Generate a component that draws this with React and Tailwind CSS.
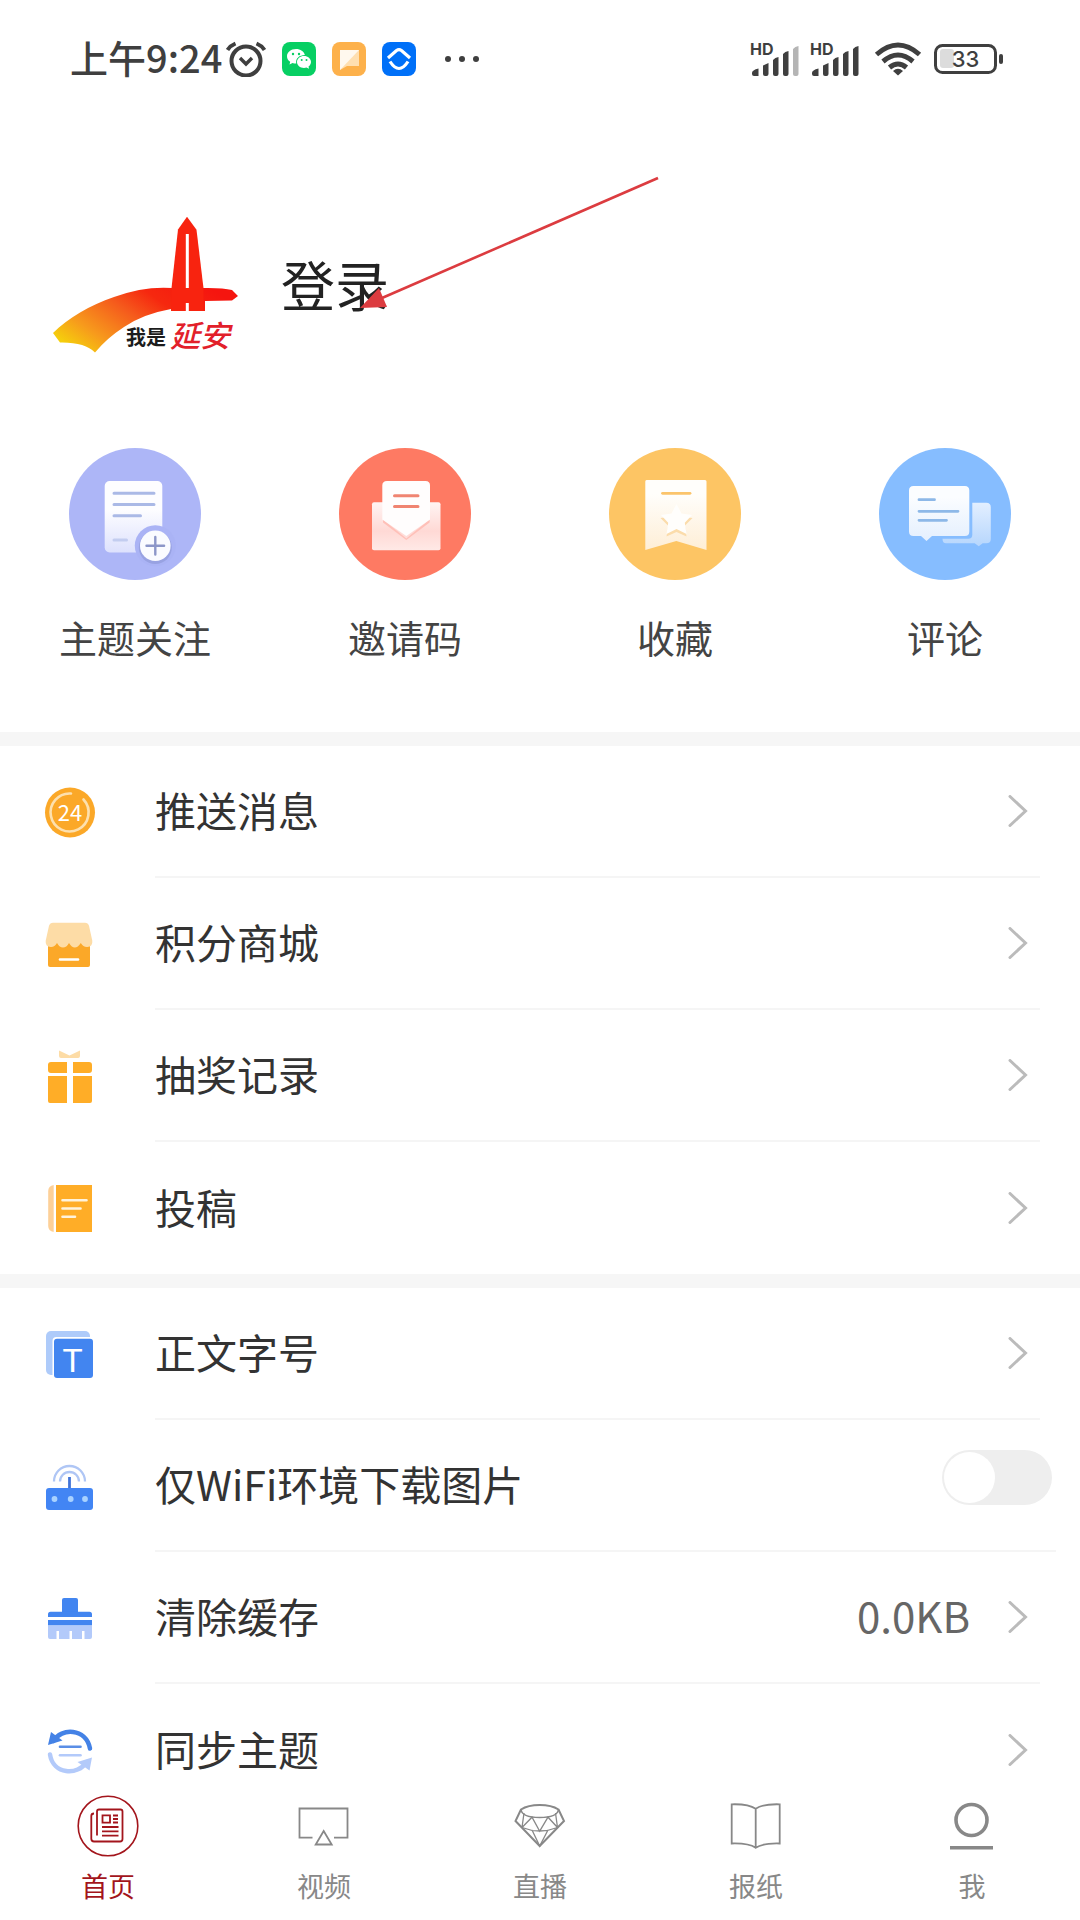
import React, { useState } from "react";

const IconPush = () => (
    <>
        <circle cx="28" cy="28.5" r="25" fill="#fba828" />
        <path d="M41.5 15.5A19 19 0 1 1 29 9.5" fill="none" stroke="#fde0ae" strokeWidth="2.6" strokeLinecap="round" />
        <text x="28" y="36.5" textAnchor="middle" fontSize="22" fill="#fff">24</text>
    </>
);

const IconShop = () => (
    <>
        <path d="M6 26h42v23a2 2 0 0 1-2 2H8a2 2 0 0 1-2-2z" fill="#fba828" />
        <path d="M11 6.7h32q3 0 4 3l3.3 15q.6 6-5 6.3q-4 .3-6.5-4-3 4.500-6 4.500t-5.800-4.500q-2.500 4.500-6 4.500t-6-4.500q-2.500 4.300-6.300 4-5.700-.3-5-6.300l3.300-15q1-3 4-3z" fill="#fddca6" />
        <path d="M18 43.500h18" stroke="#fff" strokeWidth="2.600" strokeLinecap="round" />
    </>
);

const IconGift = () => (
    <>
        <path d="M17 2.500l10.500 5L38 2.500v5.500q0 2-2 2H19q-2 0-2-2z" fill="#fddca6" />
        <path d="M9 14h16v11H9q-3 0-3-3v-5q0-3 3-3zM31 14h16q3 0 3 3v5q0 3-3 3H31zM6 28h19v27H8q-2 0-2-2zM31 28h19v25q0 2-2 2H31z" fill="#ffad27" />
    </>
);

const IconBook = () => (
    <>
        <path d="M11.700 5v47q-5.500-1-5.500-6V11q0-5 5.500-6z" fill="#fdd098" />
        <path d="M14 5h36v47H14z" fill="#ffad27" />
        <path d="M20.500 20.200h24M20.500 28.500h18M20.500 36.700h12.500" stroke="#fff3dc" strokeWidth="2.600" strokeLinecap="round" />
    </>
);

const IconFont = () => (
    <>
        <rect x="4" y="5" width="44" height="44" rx="5" fill="#aecbfa" />
        <rect x="10.500" y="11" width="43" height="43" rx="4" fill="#fff" />
        <rect x="12" y="12.700" width="39" height="39.300" rx="3" fill="#4285f0" />
        <text x="30.500" y="46" textAnchor="middle" fontSize="33" fill="#fff" fontFamily="Liberation Sans, sans-serif">T</text>
    </>
);

const IconRouter = () => (
    <>
        <path d="M12 23.500a15.500 15.500 0 0 1 31 0M18 23.500a9.500 9.500 0 0 1 19 0" fill="none" stroke="#afc6f5" strokeWidth="2.300" />
        <path d="M27.500 19v12" stroke="#4274d8" strokeWidth="2.800" />
        <rect x="4" y="30" width="47" height="22" rx="3" fill="#4285f4" />
        <circle cx="12.500" cy="41" r="2.900" fill="#a9d2ff" />
        <circle cx="28.700" cy="41" r="2.900" fill="#a9d2ff" />
        <circle cx="43" cy="41" r="2.900" fill="#a9d2ff" />
    </>
);

const IconBrush = () => (
    <>
        <path d="M22 8h12q2 0 2 2v12H20V10q0-2 2-2z" fill="#4285f0" />
        <path d="M8.500 21.700h39q2.500 0 2.500 2.500V27H6v-2.800q0-2.500 2.500-2.500zM6 30h44v5.500H6z" fill="#4285f0" />
        <path d="M6 35.500h44V47q0 2-2 2h-5.500v-8h-2.500v8H30v-8h-2.500v8H17v-8h-2.500v8H8q-2 0-2-2z" fill="#b3cafa" />
    </>
);

const IconSync = () => (
    <>
        <path d="M11.500 19C19 5.500 44 6 48 26.500" fill="none" stroke="#4482e6" strokeWidth="4.500" strokeLinecap="round" />
        <path d="M9 10L6 23l14.500-4.500z" fill="#4482e6" />
        <path d="M8 32.500C11 52.500 36 54 44.500 40" fill="none" stroke="#b3cafa" strokeWidth="4.500" strokeLinecap="round" />
        <path d="M47.500 48.500L50 35.500l-14.500 4.500z" fill="#b3cafa" />
        <path d="M18 24.700h20.500" stroke="#5a8ee6" strokeWidth="2.600" strokeLinecap="round" />
        <path d="M18 33.200h20.500" stroke="#b3cafa" strokeWidth="2.600" strokeLinecap="round" />
    </>
);

const TopicIcon = () => (
    <>
        <defs>
            <linearGradient id="topicFade" x1="0" y1="0" x2="0" y2="1">
                <stop offset="0.400" stopColor="#fdfdff" />
                <stop offset="1" stopColor="#dde1fd" />
            </linearGradient>
        </defs>
        <circle cx="66" cy="66" r="66" fill="#adb6f7" />
        <rect x="35.700" y="33" width="57.600" height="71.500" rx="5" fill="url(#topicFade)" />
        <path d="M45 45.300h40M45 56.500h40M45 67.700h26.500" stroke="#aab9e6" strokeWidth="3" strokeLinecap="round" />
        <path d="M45 92h12.500" stroke="#c3cdf0" strokeWidth="3" strokeLinecap="round" />
        <circle cx="86.300" cy="97.700" r="20.500" fill="#aab3f5" />
        <circle cx="86.300" cy="99.500" r="16.500" fill="#98a2e2" />
        <circle cx="86.300" cy="97.700" r="15.300" fill="#fafbff" />
        <path d="M77.500 97.700h17.600M86.300 89v17.500" stroke="#8c96c8" strokeWidth="2.400" strokeLinecap="round" />
    </>
);

const InviteIcon = () => (
    <>
        <defs>
            <linearGradient id="envelopeFade" x1="0" y1="0" x2="0" y2="1">
                <stop offset="0" stopColor="#fff4f3" />
                <stop offset="0.600" stopColor="#ffd9d5" />
                <stop offset="1" stopColor="#ffe9e6" />
            </linearGradient>
        </defs>
        <circle cx="66" cy="66" r="66" fill="#fe7a63" />
        <rect x="33" y="54.300" width="68.500" height="48" rx="2" fill="url(#envelopeFade)" />
        <path d="M44 71.500l23.300 19 23.300-19v3L67.300 92 44 74.500z" fill="#ffc0b8" />
        <path d="M48 33h38.500q4.500 0 4.500 4.500V71.500L67.300 88 43.300 71.500V37.500q0-4.500 4.700-4.500z" fill="#fffdfd" />
        <path d="M55.500 47.700h23.500M55.500 58.500h23.500" stroke="#f08471" strokeWidth="3" strokeLinecap="round" />
    </>
);

const FavoriteIcon = () => (
    <>
        <defs>
            <linearGradient id="ribbonFade" x1="0" y1="0" x2="0" y2="1">
                <stop offset="0.200" stopColor="#fffefb" />
                <stop offset="1" stopColor="#feeed6" />
            </linearGradient>
        </defs>
        <circle cx="66" cy="66" r="66" fill="#fdc564" />
        <path d="M37.500 32h58.500q1.500 0 1.500 1.500V102L67.300 93 36.300 102V33.500q0-1.500 1.200-1.500z" fill="url(#ribbonFade)" />
        <path d="M53.500 45.300h27.500" stroke="#fbc46b" strokeWidth="2.800" strokeLinecap="round" />
        <path d="M67.500 59l5 9.500 11 1.500-7.700 7.800L77.500 88.500 67.500 84l-10 4.500 1.700-10.700L51.500 70l11-1.500z" fill="#fbdcab" />
        <path d="M67.500 56l5 9.500 10.500 1.500-7.200 7.800L77.500 86 67.500 81l-10 5 1.700-11.200L52 67l10.500-1.500z" fill="#fffefc" />
    </>
);

const CommentIcon = () => (
    <>
        <defs>
            <linearGradient id="bubbleFade" x1="0" y1="0" x2="0" y2="1">
                <stop offset="0.200" stopColor="#fbfdff" />
                <stop offset="1" stopColor="#e4effe" />
            </linearGradient>
            <linearGradient id="bubbleBack" x1="0" y1="0" x2="0" y2="1">
                <stop offset="0" stopColor="#e3efff" />
                <stop offset="1" stopColor="#b6d6fd" />
            </linearGradient>
        </defs>
        <circle cx="66" cy="66" r="66" fill="#86bdff" />
        <path d="M93.300 54.700h14q4.500 0 4.500 4.500V91q0 4.300-4.500 4.300h-3.600l-4 3-4-3H67q-3.500 0-3.500-4.500h25.800q4 0 4-4z" fill="url(#bubbleBack)" />
        <path d="M34.500 38h51.300q4.500 0 4.500 4.500v41q0 4.500-4.500 4.500H53l-5.500 5-5.500-5h-7.500Q30 88 30 83.500v-41Q30 38 34.500 38z" fill="url(#bubbleFade)" />
        <path d="M40 51.700h15.500M40 63.300h39M40 72.300h27.500" stroke="#8db8e8" strokeWidth="2.800" strokeLinecap="round" />
    </>
);

const HomeIcon = () => (
    <>
        <circle cx="32" cy="32" r="29.800" strokeWidth="1.600" />
        <path d="M21 19v-1.500q0-2 2-2h21.500q2 0 2 2v27.500q0 2.500-2.500 2.500H18q-2.700 0-2.700-2.700V22q0-2.500 2.700-2.500M21 19v22.500" />
        <path d="M26.500 21.300h7.500v7.400h-7.500zM37 21.500h5M37 25h5M37 28.500h5M26 33h16.500M26 37.300h16.500M26 41.700h16.500" />
    </>
);

const VideoIcon = () => (
    <path d="M20.500 43.700H7.500V14.500h48v29.200H42M31.700 37l-8 13.500h16z" />
);

const GemIcon = () => (
    <>
        <path d="M31.700 11Q20 11 13 15.500L7.500 27l24.200 25L56 27l-5.500-11.500Q43.500 11 31.700 11z" strokeWidth="2" />
        <path d="M13 15.500q1 8 18.700 8t18.800-8" strokeWidth="1.600" />
        <path d="M16 19l-2 14.500q17.700 7 35.500 0L47.500 19M14 33.500l10-10.300 7.700 14 8.300-14 9.500 10.300M24 36l7.700 16L40 36" strokeWidth="1.300" />
    </>
);

const PaperIcon = () => (
    <path d="M7.700 10.300q17-.5 24 4.500 7-5 24-4.500v39.200q-17-.500-24 4.300-7-4.800-24-4.300zM31.700 14.800v39" />
);

const MeIcon = () => (
    <>
        <circle cx="31.500" cy="26" r="15.500" strokeWidth="3.600" />
        <path d="M10 53.700h43" strokeWidth="3.600" />
    </>
);

const quickLinks = [
    { label: "主题关注", Icon: TopicIcon },
    { label: "邀请码", Icon: InviteIcon },
    { label: "收藏", Icon: FavoriteIcon },
    { label: "评论", Icon: CommentIcon },
];

const serviceRows = [
    { label: "推送消息", Icon: IconPush },
    { label: "积分商城", Icon: IconShop },
    { label: "抽奖记录", Icon: IconGift },
    { label: "投稿", Icon: IconBook },
];

const settingRows = [
    { label: "正文字号", Icon: IconFont },
    { label: "仅WiFi环境下载图片", Icon: IconRouter, toggle: true },
    { label: "清除缓存", Icon: IconBrush, value: "0.0KB" },
    { label: "同步主题", Icon: IconSync },
];

const tabs = [
    { label: "首页", Icon: HomeIcon, active: true },
    { label: "视频", Icon: VideoIcon },
    { label: "直播", Icon: GemIcon },
    { label: "报纸", Icon: PaperIcon },
    { label: "我", Icon: MeIcon },
];

const Signal = ({ weak }) => (
    <svg viewBox="0 -2 52 40" className="h-10 w-[52px]" fill="#3f3f3f">
        <text x="0" y="14" fontSize="16" fontWeight="700" fontFamily="Inter, sans-serif">HD</text>
        <path d="M2 32q0-3 6.500-4.500V35H4q-2 0-2-2zM13 24.500l5.500-2.500v11q0 2-2 2H15q-2 0-2-2zM23 19q2-2.500 5.500-3v17q0 2-2 2H25q-2 0-2-2zM33 13q2-2.500 5.500-3v23q0 2-2 2H35q-2 0-2-2z" />
        <path d="M43 8q2-2.500 5.500-3v28q0 2-2 2H45q-2 0-2-2z" fill={weak ? "#b5b5b5" : "#3f3f3f"} />
    </svg>
);

const StatusBar = () => (
    <header className="flex h-[118px] items-center justify-between pr-[76px] pl-[70px] text-[#3f3f3f]">
        <div className="flex items-center gap-4">
            <div className="flex items-center gap-1">
                <span className="pb-1 text-[38px] leading-none font-medium">上午9:24</span>
                <svg viewBox="0 0 40 36" className="h-9 w-10" fill="none" stroke="#3f3f3f" strokeWidth="4">
                    <circle cx="20" cy="20" r="14.500" />
                    <path d="M14 17l6 6 6-6" strokeWidth="3.400" />
                    <path d="M1.500 9q3-4.500 8-6.500M38.500 9q-3-4.500-8-6.500" />
                </svg>
            </div>
            <svg viewBox="0 0 34 34" className="size-[34px]">
                <rect width="34" height="34" rx="8" fill="#07cf63" />
                <path d="M14 7c-5.200 0-9 3.300-9 7.300 0 2.300 1.200 4.200 3.200 5.500L7.500 22.500l3-1.600c1.200.4 2.400.6 3.700.6-.8-5 3-8.500 8.700-8.500C22 9.500 18.500 7 14 7z" fill="#fff" />
                <path d="M22 14c4 0 7 2.700 7 6 0 1.900-1 3.500-2.500 4.600l.5 2.200-2.500-1.300c-.8.2-1.600.4-2.500.4-4 0-7-2.600-7-5.900s3-6 7-6z" fill="#fff" />
                <g fill="#07cf63">
                    <circle cx="11" cy="12" r="1.200" />
                    <circle cx="17" cy="12" r="1.200" />
                    <circle cx="19.700" cy="18" r="1" />
                    <circle cx="24.500" cy="18" r="1" />
                </g>
            </svg>
            <svg viewBox="0 0 34 34" className="size-[34px]">
                <rect width="34" height="34" rx="8" fill="#fdb14b" />
                <path d="M8 8h19v16H15l-7 4z" fill="#ffdfb0" />
                <path d="M8 8h19L8 28z" fill="#fff8ee" />
            </svg>
            <svg viewBox="0 0 34 34" className="size-[34px]" fill="none" stroke="#fff" strokeWidth="3.200">
                <rect width="34" height="34" rx="8" fill="#0070f8" stroke="none" />
                <path d="M6 16l8.500-7.500q2.500-1.700 5 0L28 16" />
                <path d="M8 19.500q9 14 18 0" />
            </svg>
            <svg viewBox="0 0 36 8" className="ml-3 h-2 w-9" fill="#3f3f3f">
                <circle cx="4" cy="4" r="3" />
                <circle cx="18" cy="4" r="3" />
                <circle cx="32" cy="4" r="3" />
            </svg>
        </div>
        <div className="flex items-center gap-2">
            <Signal weak />
            <Signal />
            <svg viewBox="0 0 48 36" className="ml-1 h-9 w-12" fill="none" stroke="#3f3f3f" strokeWidth="5">
                <path d="M2.500 13.500Q24-5.500 45.500 13.500M9 20.500q15-13 30 0M15.500 26.500q8.500-7 17 0" />
                <path d="M24 34.500l-5-4.500q5-4.500 10 0z" fill="#3f3f3f" stroke="none" />
            </svg>
            <svg viewBox="0 0 70 32" className="ml-1 h-8 w-[70px]">
                <rect x="6" y="6" width="14" height="19" rx="3" fill="#dcdcdc" />
                <rect x="1.500" y="2.500" width="60" height="27" rx="7" fill="none" stroke="#3f3f3f" strokeWidth="3" />
                <rect x="65" y="11" width="4" height="10" rx="2" fill="#3f3f3f" />
                <text x="31.500" y="24" textAnchor="middle" fontSize="22" fontWeight="500" fontFamily="Inter, sans-serif" fill="#3f3f3f">33</text>
            </svg>
        </div>
    </header>
);

const Logo = () => (
    <svg viewBox="0 0 196 148" className="h-[148px] w-[196px]" role="img" aria-label="我是延安">
        <defs>
            <linearGradient id="sweep" x1="0" y1="0.800" x2="1" y2="0.300">
                <stop offset="0" stopColor="#f5d60a" />
                <stop offset="0.220" stopColor="#f79a1c" />
                <stop offset="0.500" stopColor="#f55a1c" />
                <stop offset="0.700" stopColor="#f6280f" />
                <stop offset="1" stopColor="#f5150f" />
            </linearGradient>
        </defs>
        <path d="M5 121C20 106 42 93 66 85q30-11 58-9h36q16 0 24 2l6 6-6 4.500-27 .5v10h-34v-2Q95 102 76 115q-17 11-29 25.500Q37 130 12 130.500z" fill="url(#sweep)" />
        <path d="M139 4.700l9.500 13 7 58.500v22.500h-32V76.200L130 17.500z" fill="#f8230f" />
        <path d="M139.300 22v54M139.300 91v8" stroke="#fff" strokeWidth="3" />
        <text x="78" y="133" fontSize="20" fontWeight="700" fill="#1c1c1c">我是</text>
        <text x="122" y="135" fontSize="30" fontWeight="500" fontStyle="italic" fill="#e2202a">延安</text>
    </svg>
);

const Switch = ({ id }) => {
    const [on, setOn] = useState(false);
    return (
        <input
            id={id}
            type="checkbox"
            role="switch"
            checked={on}
            onChange={() => setOn(!on)}
            className="mb-4 h-[55px] w-[110px] appearance-none rounded-full bg-[#eeeeee] p-[2px] before:block before:size-[51px] before:rounded-full before:bg-white checked:bg-[#4285f4] checked:before:ml-auto"
        />
    );
};

const Chevron = () => (
    <svg viewBox="0 0 20 32" className="h-8 w-5" fill="none" stroke="#bbbbbb" strokeWidth="3" strokeLinecap="round">
        <path d="M2 1.500L17.500 16 2 30.500" />
    </svg>
);

const RowIcon = ({ Icon }) => (
    <svg viewBox="0 0 56 56" className="mr-[57px] ml-[42px] size-14 shrink-0">
        <Icon />
    </svg>
);

const Row = ({ label, Icon, value, toggle, last }) => {
    const line = last ? "" : "border-b-2 border-[#f5f5f5]";

    if (toggle) {
        return (
            <li className="flex h-[132px] items-center">
                <RowIcon Icon={Icon} />
                <div className={`mr-6 flex h-full flex-1 items-center justify-between pr-1 ${line}`}>
                    <label htmlFor="wifi-only" className="pb-1">{label}</label>
                    <Switch id="wifi-only" />
                </div>
            </li>
        );
    }

    return (
        <li>
            <button type="button" className="flex h-[132px] w-full items-center text-left">
                <RowIcon Icon={Icon} />
                <span className={`mr-10 flex h-full flex-1 items-center justify-between pr-3 ${line}`}>
                    <span className="pb-1">{label}</span>
                    <span className="flex items-center gap-[38px]">
                        {value && <span className="pb-1 text-[42px] text-[#666666]">{value}</span>}
                        <Chevron />
                    </span>
                </span>
            </button>
        </li>
    );
};

const RowGroup = ({ rows }) => (
    <ul className="border-t-[14px] border-[#f6f6f6] text-[41px] leading-none text-[#333333]">
        {rows.map((row, i) => (
            <Row key={row.label} {...row} last={i === rows.length - 1} />
        ))}
    </ul>
);

const App = () => {
    return (
        <div className="flex h-screen flex-col bg-white font-['Noto_Sans_CJK_SC',sans-serif]">
            <StatusBar />
            <main className="min-h-0 flex-1 overflow-y-auto [scrollbar-width:none]">
                <section className="relative flex items-center gap-[37px] pt-[94px] pl-12">
                    <Logo />
                    <button type="button" className="pb-1 text-[54px] leading-none text-[#222222]">登录</button>
                    <svg viewBox="0 0 300 134" className="absolute top-[58px] left-[360px] h-[134px] w-[300px]">
                        <path d="M298 2L22 122" stroke="#dc3c40" strokeWidth="2.600" />
                        <path d="M0 132l19-20 8 19z" fill="#dc3c40" />
                    </svg>
                </section>

                <nav className="grid grid-cols-4 pt-[88px] pb-[76px]">
                    {quickLinks.map(({ label, Icon }) => (
                        <a key={label} href="#" className="flex flex-col items-center gap-[37px] text-[#444444]">
                            <svg viewBox="0 0 132 132" className="size-[132px]">
                                <Icon />
                            </svg>
                            <span className="text-[38px] leading-[39px]">{label}</span>
                        </a>
                    ))}
                </nav>

                <RowGroup rows={serviceRows} />
                <RowGroup rows={settingRows} />
            </main>

            <nav className="grid grid-cols-5 bg-white pt-2 pb-5">
                {tabs.map(({ label, Icon, active }) => (
                    <a
                        key={label}
                        href="#"
                        className={`flex flex-col items-center gap-3.5 ${active ? "text-[#a3151c]" : "text-[#888888]"}`}
                    >
                        <svg viewBox="0 0 64 64" className="size-16" fill="none" stroke="currentColor" strokeWidth="1.800">
                            <Icon />
                        </svg>
                        <span className="text-[27px] leading-7">{label}</span>
                    </a>
                ))}
            </nav>
        </div>
    );
};

export default App;
